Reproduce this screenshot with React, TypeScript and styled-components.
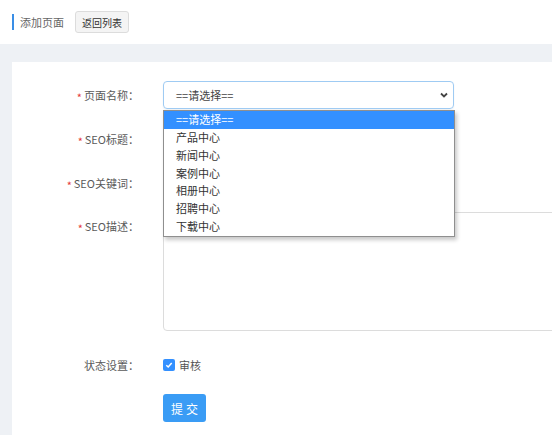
import React from "react";
import styled, { createGlobalStyle } from "styled-components";

const GlobalStyle = createGlobalStyle`
  html, body {
    margin: 0;
    padding: 0;
    background: #eef1f5;
    font-family: "Noto Sans CJK SC", "Noto Sans", sans-serif;
    overflow: hidden;
  }
  * { box-sizing: border-box; }
`;

const TopBar = styled.div`
  display: flex;
  align-items: center;
  height: 44px;
  padding-left: 12px;
  background: #fff;
`;

const PageTitle = styled.div`
  height: 16px;
  line-height: 16px;
  padding-left: 6px;
  border-left: 2px solid #3a8ee6;
  font-size: 11px;
  color: #666;
`;

const BackButton = styled.button`
  margin-left: 11px;
  height: 22px;
  width: 54px;
  padding: 0;
  border: 1px solid #dcdcdc;
  border-radius: 3px;
  background: #f4f4f4;
  font-family: inherit;
  font-size: 10px;
  color: #333;
`;

const Content = styled.div`
  padding: 18px 0 0 12px;
`;

const Card = styled.div`
  background: #fff;
  padding-top: 19px;
  height: 373px;
`;

const Row = styled.div<{ $gap?: number }>`
  display: flex;
  align-items: flex-start;
  margin-bottom: ${(p) => p.$gap ?? 16}px;
`;

const Label = styled.div`
  flex: 0 0 127px;
  height: 28px;
  margin-right: 24px;
  text-align: right;
  line-height: 28px;
  font-size: 11px;
  color: #5a5a5a;
  white-space: nowrap;
`;

const Star = styled.span`
  display: inline-block;
  line-height: 1;
  vertical-align: middle;
  color: #e4393c;
  font-size: 11px;
  margin-right: 2px;
`;

const Field = styled.div`
  position: relative;
`;

const SelectBox = styled.div`
  display: flex;
  align-items: center;
  justify-content: space-between;
  width: 291px;
  height: 28px;
  padding: 0 5px 0 12px;
  border: 1px solid #9fcbf3;
  border-radius: 4px;
  box-shadow: 0 1px 2px rgba(0, 0, 0, 0.06);
  font-size: 11px;
  color: #444;
`;

const Input = styled.div`
  width: 291px;
  height: 28px;
  border: 1px solid #dcdcdc;
  border-radius: 4px;
`;

const TextArea = styled.div`
  width: 600px;
  height: 119px;
  border: 1px solid #dcdcdc;
  border-radius: 4px;
`;

const Dropdown = styled.ul`
  position: absolute;
  top: 29px;
  left: 0;
  width: 292px;
  margin: 0;
  padding: 0;
  list-style: none;
  background: #fff;
  border: 1px solid #8f8f8f;
  box-shadow: 2px 3px 4px rgba(0, 0, 0, 0.22);
  z-index: 10;
`;

const Option = styled.li<{ $active?: boolean }>`
  height: 17.85px;
  line-height: 17.85px;
  padding-left: 12px;
  font-size: 11px;
  color: ${(p) => (p.$active ? "#fff" : "#333")};
  background: ${(p) => (p.$active ? "#3390ff" : "transparent")};
`;

const CheckLine = styled.label`
  display: flex;
  align-items: center;
  height: 28px;
  font-size: 11px;
  color: #555;
`;

const CheckBox = styled.span`
  display: inline-flex;
  align-items: center;
  justify-content: center;
  width: 12px;
  height: 12px;
  margin-right: 4px;
  border-radius: 2px;
  background: #3390ff;
`;

const SubmitButton = styled.button`
  width: 43px;
  height: 28px;
  padding: 0;
  border: none;
  border-radius: 3px;
  background: #3a9cf5;
  color: #fff;
  font-family: inherit;
  font-size: 12px;
  letter-spacing: 3px;
  text-indent: 3px;
`;

const options = ["==请选择==", "产品中心", "新闻中心", "案例中心", "相册中心", "招聘中心", "下载中心"];

export default function App() {
  return (
    <>
      <GlobalStyle />
      <TopBar>
        <PageTitle>添加页面</PageTitle>
        <BackButton>返回列表</BackButton>
      </TopBar>
      <Content>
        <Card>
          <Row>
            <Label>
              <Star>*</Star>页面名称：
            </Label>
            <Field>
              <SelectBox>
                <span>==请选择==</span>
                <svg width="8" height="6" viewBox="0 0 8 6">
                  <path d="M1 1.5 L4 4.5 L7 1.5" fill="none" stroke="#444" strokeWidth="1.8" />
                </svg>
              </SelectBox>
              <Dropdown>
                {options.map((o, i) => (
                  <Option key={o} $active={i === 0}>
                    {o}
                  </Option>
                ))}
              </Dropdown>
            </Field>
          </Row>
          <Row>
            <Label>
              <Star>*</Star>SEO标题：
            </Label>
            <Field>
              <Input />
            </Field>
          </Row>
          <Row $gap={15}>
            <Label>
              <Star>*</Star>SEO关键词：
            </Label>
            <Field>
              <Input />
            </Field>
          </Row>
          <Row $gap={20}>
            <Label>
              <Star>*</Star>SEO描述：
            </Label>
            <Field>
              <TextArea />
            </Field>
          </Row>
          <Row $gap={15}>
            <Label>状态设置：</Label>
            <CheckLine>
              <CheckBox>
                <svg width="8" height="8" viewBox="0 0 8 8">
                  <path d="M1.3 4.2 L3.2 6 L6.7 2" fill="none" stroke="#fff" strokeWidth="1.5" />
                </svg>
              </CheckBox>
              审核
            </CheckLine>
          </Row>
          <Row $gap={0}>
            <Label />
            <SubmitButton>提交</SubmitButton>
          </Row>
        </Card>
      </Content>
    </>
  );
}
